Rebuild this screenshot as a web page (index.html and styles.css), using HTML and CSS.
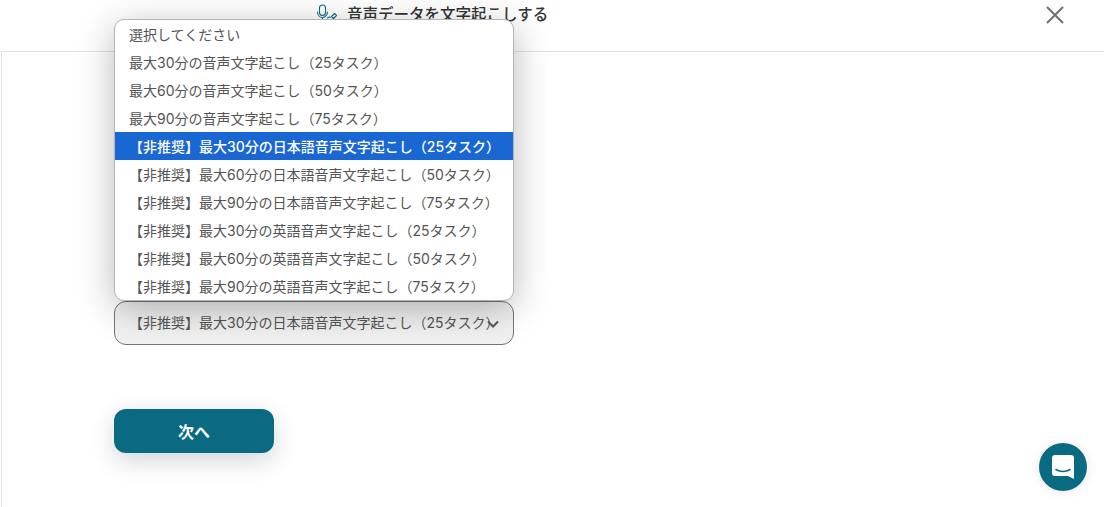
FILE: index.html
```html
<!DOCTYPE html>
<html lang="ja">
<head>
<meta charset="utf-8">
<title>音声データを文字起こしする</title>
<link rel="stylesheet" href="styles.css">
</head>
<body>
<div class="page">
  <header class="header">
    <div class="title">
      <svg class="mic" width="22" height="20" viewBox="0 0 22 20" fill="none" stroke="#0f6b82" stroke-width="1.100" stroke-linecap="round" stroke-linejoin="round">
        <rect x="3.500" y="1" width="6" height="10.500" rx="3"/>
        <path d="M1.500 8c0 3.300 2.300 5.500 5 5.500s5-2.200 5-5.500"/>
        <path d="M6.500 13.500v3"/>
        <path d="M15.500 12.500l3-3 2 2-3 3z"/>
        <path d="M11.500 14c1-1 2-1 3-1"/>
      </svg>
      <span class="title-text">音声データを文字起こしする</span>
    </div>
    <button class="close" aria-label="閉じる">
      <svg width="20" height="20" viewBox="0 0 20 20" stroke="#6f6f6f" stroke-width="2" fill="none"><path d="M2 2l16 16M18 2L2 18"/></svg>
    </button>
  </header>
  <main class="main">
    <div class="field">
      <ul class="menu">
        <li class="opt">選択してください</li>
        <li class="opt">最大30分の音声文字起こし（25タスク）</li>
        <li class="opt">最大60分の音声文字起こし（50タスク）</li>
        <li class="opt">最大90分の音声文字起こし（75タスク）</li>
        <li class="opt active">【非推奨】最大30分の日本語音声文字起こし（25タスク）</li>
        <li class="opt">【非推奨】最大60分の日本語音声文字起こし（50タスク）</li>
        <li class="opt">【非推奨】最大90分の日本語音声文字起こし（75タスク）</li>
        <li class="opt">【非推奨】最大30分の英語音声文字起こし（25タスク）</li>
        <li class="opt">【非推奨】最大60分の英語音声文字起こし（50タスク）</li>
        <li class="opt">【非推奨】最大90分の英語音声文字起こし（75タスク）</li>
      </ul>
      <div class="select">
        <span class="select-text">【非推奨】最大30分の日本語音声文字起こし（25タスク）</span>
        <svg class="chev" width="12" height="8" viewBox="0 0 12 8" fill="none" stroke="#555" stroke-width="2"><path d="M1 1.500l5 5 5-5"/></svg>
      </div>
    </div>
    <button class="next">次へ</button>
  </main>
  <button class="chat" aria-label="チャット">
    <svg width="22" height="24" viewBox="0 0 22 24"><path fill="#fff" d="M3 0h16a3 3 0 0 1 3 3v21l-6-3H3a3 3 0 0 1-3-3V3a3 3 0 0 1 3-3z"/><path d="M4 14.500c4 2.700 10 2.700 14 0" fill="none" stroke="#0a6a82" stroke-width="1.600" stroke-linecap="round"/></svg>
  </button>
</div>
</body>
</html>
```
FILE: styles.css
```css
* { box-sizing: border-box; }
html, body { margin: 0; height: 100%; }
body {
  background: #fff;
  overflow: hidden;
  font-family: Inter, "Noto Sans CJK JP", sans-serif;
  color: #555;
}
.page { position: relative; height: 507px; display: flex; flex-direction: column; }
.header {
  height: 52px;
  flex: none;
  border-bottom: 1px solid #e2e2e2;
  display: flex;
  align-items: flex-start;
  padding-left: 316px;
  padding-right: 39px;
}
.title { display: flex; align-items: center; gap: 9px; height: 28px; }
.mic { display: block; }
.title-text { font-size: 15.500px; font-weight: 500; color: #333; line-height: 28px; padding-top: 1px; }
.close {
  margin-left: auto;
  margin-top: 5px;
  padding: 0;
  border: 0;
  background: none;
  width: 20px;
  height: 20px;
}
.close svg { display: block; }
.main {
  flex: 1;
  margin-left: 1px;
  border-left: 1px solid #e2e2e2;
  padding: 249px 0 0 112px;
}
.field { position: relative; width: 400px; }
.menu {
  position: absolute;
  left: 0;
  bottom: 44px;
  width: 400px;
  margin: 0;
  padding: 0;
  list-style: none;
  background: #fff;
  border: 1px solid #b5b5b5;
  border-radius: 10px;
  box-shadow: 0 8px 36px rgba(0, 0, 0, .28);
  z-index: 2;
  overflow: hidden;
}
.opt {
  height: 28px;
  line-height: 28px;
  padding: 1px 0 0 14px;
  font-size: 14px;
  color: #555;
  white-space: nowrap;
}
.opt.active { background: #1967d2; color: #fff; font-weight: 500; }
.select {
  height: 44px;
  border: 1px solid #767676;
  border-radius: 12px;
  display: flex;
  align-items: center;
  padding: 0 14px;
  position: relative;
  font-size: 14px;
  line-height: 42px;
  color: #555;
  background: #f1f1f1;
}
.select-text { white-space: nowrap; overflow: hidden; flex: 1; }
.chev { position: absolute; right: 14px; top: 18px; }
.next {
  display: block;
  margin-top: 64px;
  width: 160px;
  height: 44px;
  border: 0;
  border-radius: 12px;
  background: #0a6a82;
  color: #fff;
  font-family: inherit;
  font-size: 16px;
  font-weight: 700;
  padding: 0 0 1px;
  box-shadow: 0 8px 24px rgba(0, 30, 50, .18);
}
.chat {
  position: absolute;
  left: 1039px;
  top: 443px;
  width: 48px;
  height: 48px;
  border: 0;
  border-radius: 50%;
  background: #0a6a82;
  box-shadow: 0 1px 12px rgba(0, 0, 0, .1);
  display: flex;
  align-items: center;
  justify-content: center;
  padding: 0;
}
```
